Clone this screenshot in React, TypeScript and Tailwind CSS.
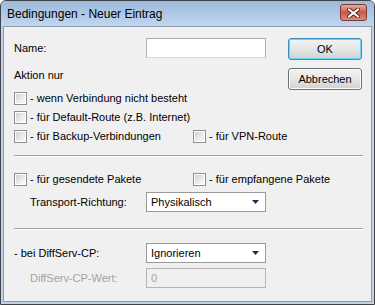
import type { ReactNode } from 'react';

const FONT = "font-['Liberation_Sans',Arial,sans-serif]";

function CheckBox() {
  return (
    <span className="flex h-[13px] w-[13px] shrink-0 border border-[#8e8f8f] bg-white p-px">
      <span className="block h-full w-full bg-gradient-to-br from-[#cfd0d2] via-[#e8e8e9] to-[#fbfbfb]" />
    </span>
  );
}

function CheckRow({ label, className = '' }: { label: string; className?: string }) {
  return (
    <div className={`flex h-[19px] items-center gap-[3px] ${className}`}>
      <CheckBox />
      <span>{label}</span>
    </div>
  );
}

function Separator({ className = '' }: { className?: string }) {
  return <div className={`h-[2px] border-t border-[#a0a0a0] border-b border-b-white ${className}`} />;
}

function Combo({ value }: { value: string }) {
  return (
    <div className="flex h-[20px] w-[120px] items-center justify-between border border-[#9a9a9a] bg-white pl-[4px] pr-[6px]">
      <span>{value}</span>
      <svg width="7" height="4" viewBox="0 0 7 4">
        <path d="M0 0h7L3.5 4z" fill="#1c2a5c" />
      </svg>
    </div>
  );
}

function Button({ children, primary = false }: { children: ReactNode; primary?: boolean }) {
  return (
    <button
      type="button"
      className={`flex h-[22px] w-[74px] items-center justify-center rounded-[3px] border bg-gradient-to-b from-[#f3f3f3] via-[#e6e6e6] to-[#d2d2d2] text-black ${
        primary
          ? 'border-[#3c8fc4] shadow-[inset_0_0_0_1px_#6ad6f7]'
          : 'border-[#707070] shadow-[inset_0_0_0_1px_#fbfbfb]'
      }`}
    >
      {children}
    </button>
  );
}

export default function App() {
  return (
    <div
      className={`${FONT} flex h-[305px] w-[375px] flex-col rounded-t-[6px] border border-[#404348] bg-[#bed3eb] text-[11px] text-black`}
    >
      {/* title bar */}
      <div className="flex h-[25px] shrink-0 items-start rounded-t-[5px] bg-gradient-to-b from-[#9cb9da] to-[#c1d6ed]">
        <span className="ml-[6px] mt-[6px] text-[12px] leading-[15px]">Bedingungen - Neuer Eintrag</span>
        <button
          type="button"
          className="ml-auto mr-[7px] mt-[3px] flex h-[17px] w-[27px] items-center justify-center rounded-[3px] border border-[#7d3a33] bg-gradient-to-b from-[#e6aaa2] via-[#c9584b] to-[#d98a7e]"
        >
          <svg width="13" height="10" viewBox="0 0 13 10">
            <path d="M2 1.5l9 7M11 1.5l-9 7" stroke="#5b2520" strokeWidth="4" strokeLinecap="square" />
            <path d="M2 1.5l9 7M11 1.5l-9 7" stroke="#ffffff" strokeWidth="2" strokeLinecap="square" />
          </svg>
        </button>
      </div>

      {/* client area */}
      <div className="mx-[2px] mb-[2px] flex flex-1 flex-col border border-[#8a9cb2] bg-[#f0f0f0] pl-[10px] pr-[8px] pt-[11px]">
        <div className="flex">
          <div className="flex w-[274px] flex-col">
            <div className="flex h-[20px] items-center">
              <span className="w-[132px]">Name:</span>
              <div className="h-[20px] w-[120px] border border-[#abadb3] border-b-[#d5d9e0] bg-white" />
            </div>
            <div className="mt-[9px] flex h-[16px] items-center">Aktion nur</div>
            <CheckRow label="- wenn Verbindung nicht besteht" className="mt-[6px]" />
            <CheckRow label="- für Default-Route (z.B. Internet)" />
            <div className="flex">
              <CheckRow label="- für Backup-Verbindungen" className="w-[179px]" />
              <CheckRow label="- für VPN-Route" />
            </div>
          </div>
          <div className="flex flex-col gap-[8px]">
            <Button primary>OK</Button>
            <Button>Abbrechen</Button>
          </div>
        </div>

        <Separator className="mt-[9px]" />

        <div className="mt-[13px] flex">
          <CheckRow label="- für gesendete Pakete" className="w-[179px]" />
          <CheckRow label="- für empfangene Pakete" />
        </div>

        <div className="mt-[3px] flex h-[20px] items-center">
          <span className="w-[132px] pl-[16px]">Transport-Richtung:</span>
          <Combo value="Physikalisch" />
        </div>

        <Separator className="mt-[16px]" />

        <div className="mt-[13px] flex h-[20px] items-center">
          <span className="w-[132px]">- bei DiffServ-CP:</span>
          <Combo value="Ignorieren" />
        </div>

        <div className="mt-[5px] flex h-[20px] items-center text-[#a3a3a3]">
          <span className="w-[132px] pl-[16px]">DiffServ-CP-Wert:</span>
          <div className="flex h-[20px] w-[120px] items-center border border-[#b5b5b5] bg-[#f0f0f0] pl-[4px]">0</div>
        </div>
      </div>
    </div>
  );
}
